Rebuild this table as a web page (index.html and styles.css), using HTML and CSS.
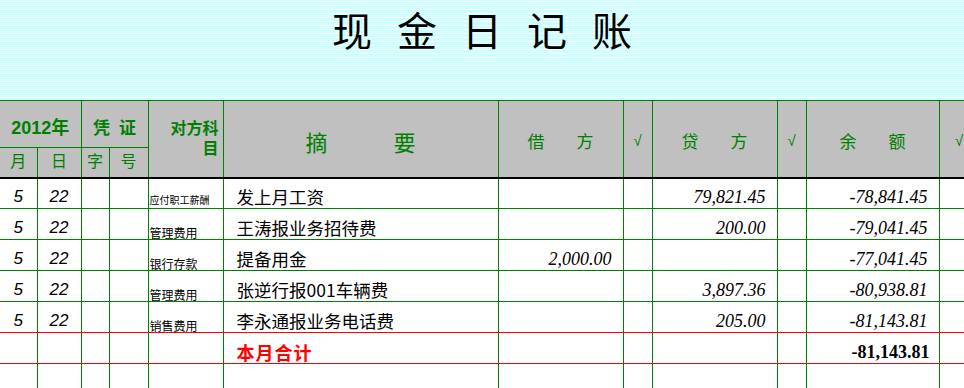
FILE: index.html
```html
<!DOCTYPE html>
<html lang="zh-CN">
<head>
<meta charset="utf-8">
<title>现金日记账</title>
<link rel="stylesheet" href="styles.css">
</head>
<body>
<div class="title-band"><h1 class="title">现金日记账</h1></div>
<table class="ledger">
  <colgroup>
    <col class="w-m"><col class="w-d"><col class="w-z"><col class="w-h"><col class="w-acct"><col class="w-desc"><col class="w-amt"><col class="w-chk"><col class="w-amt"><col class="w-chk"><col class="w-bal"><col class="w-last">
  </colgroup>
  <thead>
    <tr class="ra">
      <th colspan="2" class="h-year first">2012年</th>
      <th colspan="2" class="h-pz">凭<span class="sp">&nbsp;</span>证</th>
      <th rowspan="2" class="h-acct hb">对方科<br>目</th>
      <th rowspan="2" class="h-desc hb">摘　　　要</th>
      <th rowspan="2" class="h-spread hb"><span class="pair"><span>借</span><span>方</span></span></th>
      <th rowspan="2" class="h-chk hb">√</th>
      <th rowspan="2" class="h-spread hb"><span class="pair"><span>贷</span><span>方</span></span></th>
      <th rowspan="2" class="h-chk hb">√</th>
      <th rowspan="2" class="h-spread hb"><span class="pair"><span>余</span><span>额</span></span></th>
      <th rowspan="2" class="h-chk hb">√</th>
    </tr>
    <tr class="rb">
      <th class="h-sub hb first">月</th>
      <th class="h-sub hb">日</th>
      <th class="h-sub hb">字</th>
      <th class="h-sub hb">号</th>
    </tr>
  </thead>
  <tbody>
    <tr class="rd">
      <td class="md first">5</td><td class="md">22</td><td></td><td></td>
      <td class="acct tiny">应付职工薪酬</td>
      <td class="desc">发上月工资</td>
      <td class="num"></td><td></td>
      <td class="num">79,821.45</td><td></td>
      <td class="num">-78,841.45</td><td></td>
    </tr>
    <tr class="rd">
      <td class="md first">5</td><td class="md">22</td><td></td><td></td>
      <td class="acct">管理费用</td>
      <td class="desc">王涛报业务招待费</td>
      <td class="num"></td><td></td>
      <td class="num">200.00</td><td></td>
      <td class="num">-79,041.45</td><td></td>
    </tr>
    <tr class="rd">
      <td class="md first">5</td><td class="md">22</td><td></td><td></td>
      <td class="acct">银行存款</td>
      <td class="desc">提备用金</td>
      <td class="num">2,000.00</td><td></td>
      <td class="num"></td><td></td>
      <td class="num">-77,041.45</td><td></td>
    </tr>
    <tr class="rd">
      <td class="md first">5</td><td class="md">22</td><td></td><td></td>
      <td class="acct">管理费用</td>
      <td class="desc">张逆行报001车辆费</td>
      <td class="num"></td><td></td>
      <td class="num">3,897.36</td><td></td>
      <td class="num">-80,938.81</td><td></td>
    </tr>
    <tr class="rd red-bottom">
      <td class="md first">5</td><td class="md">22</td><td></td><td></td>
      <td class="acct">销售费用</td>
      <td class="desc">李永通报业务电话费</td>
      <td class="num"></td><td></td>
      <td class="num">205.00</td><td></td>
      <td class="num">-81,143.81</td><td></td>
    </tr>
    <tr class="rd red-bottom">
      <td class="first"></td><td></td><td></td><td></td>
      <td></td>
      <td class="desc total-label">本月合计</td>
      <td></td><td></td>
      <td></td><td></td>
      <td class="total-num">-81,143.81</td><td></td>
    </tr>
    <tr class="rd">
      <td class="first"></td><td></td><td></td><td></td><td></td><td></td><td></td><td></td><td></td><td></td><td></td><td></td>
    </tr>
  </tbody>
</table>
</body>
</html>
```
FILE: styles.css
```css
html, body {
  margin: 0;
  padding: 0;
  overflow: hidden;
  background: #fff;
}

.title-band {
  height: 100px;
  background: repeating-linear-gradient(to bottom, #ccffff 0 1px, #ffffff 1px 2px, #ccffff 2px 4px);
  display: flex;
  justify-content: center;
  align-items: flex-start;
}

.title {
  margin: 0;
  padding: 9px 0 0 25px;
  font: 400 40px/40px "Noto Sans CJK SC", sans-serif;
  letter-spacing: 25px;
  color: #000;
}

.ledger {
  border-collapse: collapse;
  table-layout: fixed;
  width: 979px;
}

.w-m { width: 37px; }
.w-d { width: 44px; }
.w-z { width: 28px; }
.w-h { width: 39px; }
.w-acct { width: 75px; }
.w-desc { width: 275px; }
.w-amt { width: 125px; }
.w-chk { width: 29px; }
.w-bal { width: 133px; }
.w-last { width: 40px; }

.ledger th,
.ledger td {
  border: 1px solid #008000;
  padding: 0;
  overflow: hidden;
  white-space: nowrap;
}

.ledger .first { border-left: none; }

.ledger th {
  background: #c0c0c0;
  color: #008000;
  font-family: "Liberation Sans", "Noto Sans CJK SC", sans-serif;
  font-weight: 400;
  vertical-align: middle;
  text-align: center;
}

.ra { height: 47px; }
.rb { height: 30px; }
.rd { height: 31px; }

.ledger th.hb { border-bottom: 2px solid #000; }

.h-year {
  font-size: 18px;
  font-weight: 700 !important;
  padding-top: 4px !important;
}

.h-pz {
  font-size: 17px;
  font-weight: 700 !important;
  padding-top: 4px !important;
}

.sp { display: inline-block; width: 9px; }

.h-sub { font-size: 16px; line-height: 16px; }

.h-acct {
  font-size: 16px;
  font-weight: 700 !important;
  line-height: 20px;
  text-align: right !important;
  padding-right: 4px !important;
}

.h-desc {
  font-size: 22px;
  text-align: left !important;
  padding-left: 82px !important;
  padding-top: 4px !important;
}

.h-spread { font-size: 17px; padding-top: 4px !important; }

.pair {
  display: inline-flex;
  gap: 32px;
}

.h-chk { font-size: 15px; padding-top: 4px !important; }

.ledger td {
  vertical-align: bottom;
  background: #fff;
  color: #000;
}

.md {
  text-align: center;
  font: italic 17px/17px "Liberation Sans", sans-serif;
  padding-bottom: 3px !important;
}

.acct {
  font: 400 12px/13px "Noto Sans CJK SC", sans-serif;
  padding-left: 1px !important;
}

.acct.tiny {
  font-size: 10px;
  padding-bottom: 2px !important;
}

.desc {
  font: 400 17.5px/18px "Noto Sans CJK SC", sans-serif;
  padding-left: 13px !important;
  padding-bottom: 2px !important;
}

.num {
  text-align: right;
  font: italic 18px/18px "Liberation Serif", serif;
  padding-right: 11px !important;
  padding-bottom: 2px !important;
}

.total-label {
  color: #ff0000 !important;
  font-weight: 700;
  font-size: 18px;
  letter-spacing: 1px;
}

.total-num {
  text-align: right;
  font: 700 18px/18px "Liberation Serif", serif;
  padding-right: 9px !important;
  padding-bottom: 2px !important;
}

.red-bottom td { border-bottom: 1px solid #ff0000; }
```
